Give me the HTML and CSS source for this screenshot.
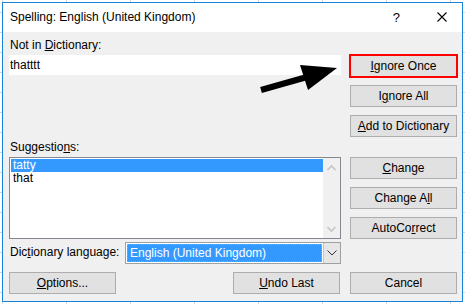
FILE: index.html
```html
<!DOCTYPE html>
<html lang="en">
<head>
    <meta charset="UTF-8">
    <meta name="viewport" content="width=device-width, initial-scale=1.0">
    <title>Spelling: English (United Kingdom)</title>
    <link rel="stylesheet" href="styles.css">
</head>
<body>
    <div class="desk">
        <div class="dialog">
            <div class="titlebar">
                <span class="title">Spelling: English (United Kingdom)</span>
                <span class="help">?</span>
                <svg class="close" width="10" height="10" viewBox="0 0 10 10">
                    <path d="M0.5 0.5 L9.5 9.5 M9.5 0.5 L0.5 9.5" stroke="#000" stroke-width="1.1" fill="none"/>
                </svg>
            </div>

            <div class="content">
                <div class="lbl">Not in <u>D</u>ictionary:</div>
                <div></div>

                <div class="notin">thatttt</div>
                <div class="stack">
                    <button class="btn btn-marked"><u>I</u>gnore Once</button>
                    <button class="btn">I<u>g</u>nore All</button>
                    <button class="btn"><u>A</u>dd to Dictionary</button>
                </div>

                <div class="lbl lbl-low">Suggestio<u>n</u>s:</div>
                <div></div>

                <div class="listbox">
                    <ul class="items">
                        <li class="selected">tatty</li>
                        <li>that</li>
                    </ul>
                    <div class="scrollbar">
                        <svg width="17" height="80" viewBox="0 0 17 80">
                            <path d="M4.5 12 L8.5 8 L12.5 12" stroke="#c4c4c4" stroke-width="1.6" fill="none"/>
                            <path d="M4.5 69 L8.5 73 L12.5 69" stroke="#c4c4c4" stroke-width="1.6" fill="none"/>
                        </svg>
                    </div>
                </div>
                <div class="stack">
                    <button class="btn"><u>C</u>hange</button>
                    <button class="btn">Change A<u>l</u>l</button>
                    <button class="btn">AutoCo<u>r</u>rect</button>
                </div>

                <div class="lang">
                    <span class="lang-label">Dic<u>t</u>ionary language:</span>
                    <div class="combo">
                        <span class="combo-value">English (United Kingdom)</span>
                        <span class="combo-drop">
                            <svg width="10" height="6" viewBox="0 0 10 6">
                                <path d="M0.5 0.5 L5 5 L9.5 0.5" stroke="#333" stroke-width="1" fill="none"/>
                            </svg>
                        </span>
                    </div>
                </div>
                <div></div>

                <div class="footer-left">
                    <button class="btn"><u>O</u>ptions...</button>
                    <button class="btn"><u>U</u>ndo Last</button>
                </div>
                <div class="footer-right">
                    <button class="btn">Cancel</button>
                </div>
            </div>
        </div>

        <!-- annotation arrow pointing at Ignore Once -->
        <svg class="arrow" width="465" height="304" viewBox="0 0 465 304">
            <path d="M261 90 L307 77" stroke="#000" stroke-width="6" fill="none"/>
            <polygon points="337,68 300,65 308,90" fill="#000"/>
        </svg>
    </div>
</body>
</html>
```

FILE: styles.css
```css
* {
    box-sizing: border-box;
}

body {
    margin: 0;
    width: 465px;
    height: 304px;
    overflow: hidden;
    font-family: "Liberation Sans", Arial, sans-serif;
    font-size: 12px;
    color: #000;
    background-color: #fff;
    /* excel sheet behind the dialog */
    background-image:
        linear-gradient(to right, #d6d6d6 1px, transparent 1px),
        linear-gradient(to bottom, #d6d6d6 1px, transparent 1px);
    background-size: 64px 20px;
    background-position: 2px 0, 0 12px;
}

.desk {
    position: relative;
    padding: 2px 0 0 2px;
}

.dialog {
    width: 461px;
    height: 300px;
    border: 1px solid #1883d7;
    background: #f0f0f0;
    display: flex;
    flex-direction: column;
}

.titlebar {
    height: 29px;
    background: #fff;
    display: flex;
    align-items: center;
    padding-left: 7px;
    padding-bottom: 1px;
}

.title {
    flex: 1;
}

.help {
    font-size: 13px;
    margin-right: 37px;
}

.close {
    margin-right: 15px;
}

.content {
    padding: 6px 4px 0 6px;
    display: grid;
    grid-template-columns: 332px 107px;
    grid-template-rows: 17px 82px 20px 82px 25px 30px;
    column-gap: 9px;
}

.lbl {
    line-height: 15px;
    padding-left: 1px;
}

.lbl-low {
    align-self: end;
    margin-bottom: 2px;
}

.notin {
    height: 20px;
    background: #fff;
    line-height: 20px;
    padding-left: 1px;
}

.stack {
    display: flex;
    flex-direction: column;
    gap: 8px;
}

.btn {
    width: 107px;
    height: 22px;
    padding: 0;
    margin: 0;
    border: 1px solid #adadad;
    background: #e1e1e1;
    font-family: inherit;
    font-size: 12px;
    color: #000;
    text-align: center;
}

.btn-marked {
    outline: 2px solid #f00;
    outline-offset: -1px;
}

.listbox {
    border: 1px solid #828790;
    background: #fff;
    display: flex;
    padding: 1px 0 0 1px;
}

.items {
    list-style: none;
    margin: 0;
    padding: 0;
    flex: 1;
}

.items li {
    height: 13px;
    line-height: 13px;
    padding-left: 2px;
}

.items .selected {
    background: #3399ff;
    color: #fff;
}

.scrollbar {
    width: 17px;
    margin-top: -1px;
    background: #f0f0f0;
}

.scrollbar svg {
    display: block;
}

.lang {
    display: flex;
    align-items: flex-end;
}

.lang-label {
    width: 116px;
    padding-left: 1px;
    line-height: 15px;
    margin-bottom: 4px;
}

.combo {
    flex: 1;
    height: 22px;
    border: 1px solid #a0a0a0;
    background: #fff;
    display: flex;
    padding: 1px;
}

.combo-value {
    flex: 1;
    background: #3399ff;
    color: #fff;
    border: 1px dotted #d89a5a;
    line-height: 16px;
    padding-left: 2px;
}

.combo-drop {
    width: 17px;
    margin: -1px -1px -1px 1px;
    background: #e6e6e6;
    border-left: 1px solid #c4c4c4;
    display: flex;
    align-items: center;
    justify-content: center;
}

.footer-left {
    display: flex;
    justify-content: space-between;
    align-items: flex-end;
}

.footer-left .btn:last-child {
    margin-right: 1px;
}

.footer-right {
    display: flex;
    align-items: flex-end;
}

.arrow {
    position: absolute;
    left: 0;
    top: 0;
    pointer-events: none;
}
```
